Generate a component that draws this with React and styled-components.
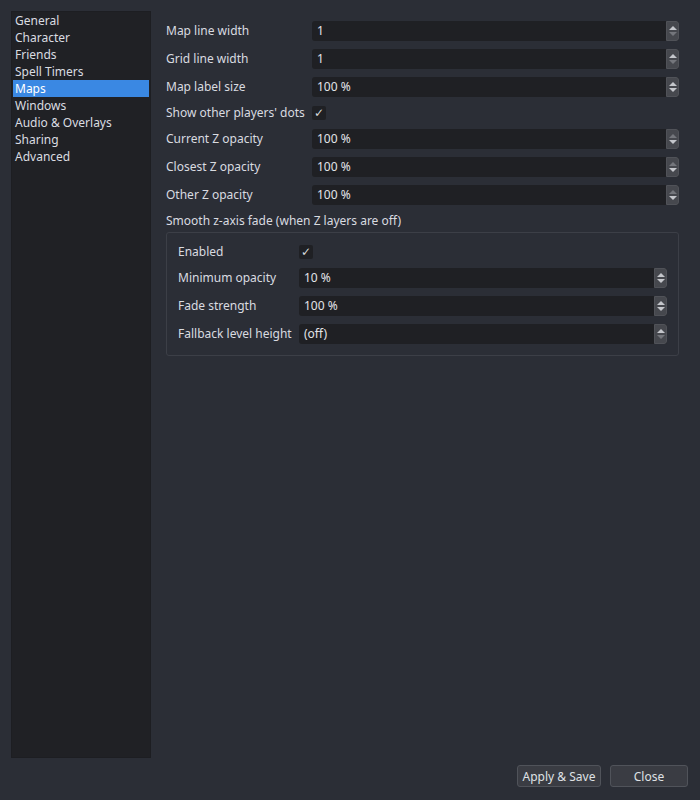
import React from 'react'
import styled, { createGlobalStyle } from 'styled-components'

const Global = createGlobalStyle`
  html, body {
    margin: 0;
    padding: 0;
    background: #2b2e36;
  }
  body {
    font-family: "Noto Sans", "Open Sans", sans-serif;
    font-size: 12px;
    color: #d9dbe0;
  }
`

const Window = styled.div`
  width: 700px;
  height: 800px;
  display: flex;
  flex-direction: column;
  background: #2b2e36;
  box-sizing: border-box;
`

const Body = styled.div`
  flex: 1;
  display: flex;
  min-height: 0;
`

const Sidebar = styled.ul`
  list-style: none;
  margin: 11px 0 0 11px;
  padding: 0 1px;
  width: 140px;
  height: 747px;
  box-sizing: border-box;
  background: #202125;
  border: 1px solid #1d1e22;
`

const NavItem = styled.li`
  height: 17px;
  line-height: 17px;
  padding-left: 2px;
  color: ${p => (p.$active ? '#ffffff' : '#dadce1')};
  background: ${p => (p.$active ? '#3a88e3' : 'transparent')};
  white-space: nowrap;
`

const Content = styled.div`
  flex: 1;
  padding: 21px 21px 0 15px;
  display: flex;
  flex-direction: column;
`

const Form = styled.div`
  display: grid;
  grid-template-columns: ${p => p.$labelWidth}px 1fr;
  row-gap: 8px;
  align-items: center;
`

const Label = styled.div`
  white-space: nowrap;
  line-height: 16px;
`

const SpinBox = styled.div`
  display: flex;
  height: 20px;
  background: #1f2024;
  border-radius: 3px;
`

const SpinValue = styled.div`
  flex: 1;
  padding-left: 5px;
  line-height: 20px;
  color: #e2e4e8;
`

const SpinButtons = styled.div`
  width: 13px;
  display: flex;
  flex-direction: column;
  align-items: center;
  justify-content: center;
  gap: 2px;
  background: #46484e;
  border: 1px solid #505258;
  border-radius: 0 3px 3px 0;
  box-sizing: border-box;
`

const Arrow = styled.div`
  width: 0;
  height: 0;
  border-left: 4px solid transparent;
  border-right: 4px solid transparent;
  ${p => (p.$down ? 'border-top' : 'border-bottom')}: 4px solid ${p => (p.$dim ? '#74767c' : '#c4c6cb')};
`

const CheckRow = styled.div`
  height: ${p => p.$h}px;
  display: flex;
  align-items: center;
`

const CheckBox = styled.div`
  width: 14px;
  height: 14px;
  background: #1f2024;
  border-radius: 2px;
  display: flex;
  align-items: center;
  justify-content: center;
  color: #d8dade;
  font-family: "DejaVu Sans", sans-serif;
  font-size: 12px;
  line-height: 14px;
`

const SectionTitle = styled.div`
  margin-top: 8px;
  line-height: 16px;
`

const Group = styled.div`
  margin-top: 3px;
  border: 1px solid #3c3f47;
  border-radius: 3px;
  padding: 11px;
`

const Footer = styled.div`
  display: flex;
  justify-content: flex-end;
  gap: 9px;
  padding: 7px 12px 13px 0;
`

const Button = styled.button`
  width: ${p => p.$w}px;
  height: 22px;
  background: #3a3c43;
  border: 1px solid #50535a;
  border-radius: 3px;
  color: #dfe1e5;
  font-family: "Noto Sans", sans-serif;
  font-size: 12px;
  padding: 0;
`

const Spin = ({ value, upDim, downDim }) => (
  <SpinBox>
    <SpinValue>{value}</SpinValue>
    <SpinButtons>
      <Arrow $dim={upDim} />
      <Arrow $down $dim={downDim} />
    </SpinButtons>
  </SpinBox>
)

const Check = ({ h }) => (
  <CheckRow $h={h}>
    <CheckBox>✓</CheckBox>
  </CheckRow>
)

const pages = ['General', 'Character', 'Friends', 'Spell Timers', 'Maps', 'Windows', 'Audio & Overlays', 'Sharing', 'Advanced']

export default function App () {
  return (
    <Window>
      <Global />
      <Body>
        <Sidebar>
          {pages.map(p => (
            <NavItem key={p} $active={p === 'Maps'}>{p}</NavItem>
          ))}
        </Sidebar>
        <Content>
          <Form $labelWidth={146}>
            <Label>Map line width</Label>
            <Spin value='1' downDim />
            <Label>Grid line width</Label>
            <Spin value='1' downDim />
            <Label>Map label size</Label>
            <Spin value='100 %' />
            <Label>Show other players' dots</Label>
            <Check h={15} />
            <Label>Current Z opacity</Label>
            <Spin value='100 %' upDim />
            <Label>Closest Z opacity</Label>
            <Spin value='100 %' upDim />
            <Label>Other Z opacity</Label>
            <Spin value='100 %' upDim />
          </Form>
          <SectionTitle>Smooth z-axis fade (when Z layers are off)</SectionTitle>
          <Group>
            <Form $labelWidth={121}>
              <Label>Enabled</Label>
              <Check h={16} />
              <Label>Minimum opacity</Label>
              <Spin value='10 %' />
              <Label>Fade strength</Label>
              <Spin value='100 %' />
              <Label>Fallback level height</Label>
              <Spin value='(off)' downDim />
            </Form>
          </Group>
        </Content>
      </Body>
      <Footer>
        <Button $w={84}>Apply &amp; Save</Button>
        <Button $w={78}>Close</Button>
      </Footer>
    </Window>
  )
}
